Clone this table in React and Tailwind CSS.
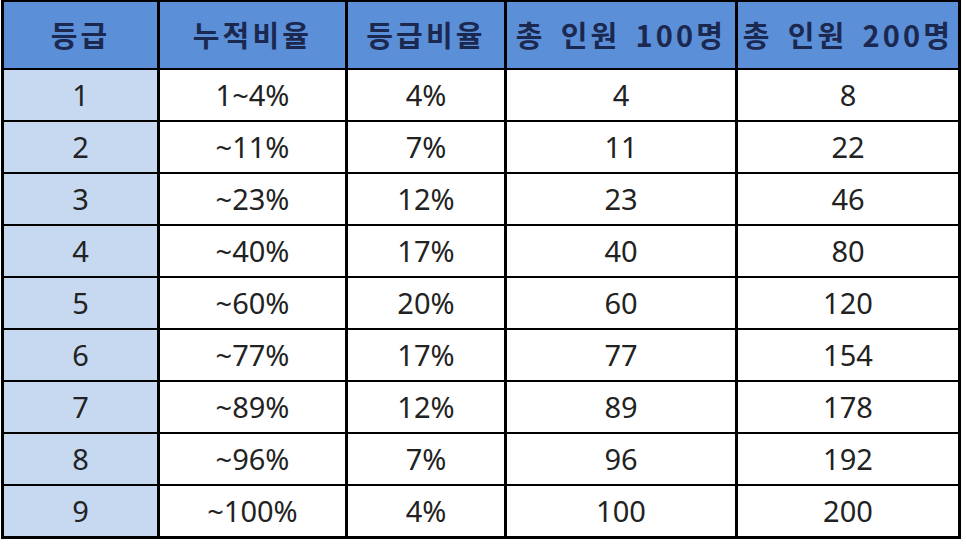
const headers = ["등급", "누적비율", "등급비율", "총 인원 100명", "총 인원 200명"];

const rows = [
    ["1", "1~4%", "4%", "4", "8"],
    ["2", "~11%", "7%", "11", "22"],
    ["3", "~23%", "12%", "23", "46"],
    ["4", "~40%", "17%", "40", "80"],
    ["5", "~60%", "20%", "60", "120"],
    ["6", "~77%", "17%", "77", "154"],
    ["7", "~89%", "12%", "89", "178"],
    ["8", "~96%", "7%", "96", "192"],
    ["9", "~100%", "4%", "100", "200"],
];

const App = () => {
    return (
        <div
            className="w-[966px] h-[544px] bg-white pl-px"
            style={{ fontFamily: '"Noto Sans", "Noto Sans CJK KR", sans-serif' }}
        >
            <div className="w-[960px] grid grid-cols-[153px_185px_156px_228px_220px] grid-rows-[66px_repeat(9,50px)] gap-x-[3px] gap-y-[2px] bg-black p-[3px] pt-[2px]">
                {headers.map((h) => (
                    <div
                        key={h}
                        className="bg-[#5b8fd8] flex items-center justify-center gap-[15px] text-[29px] font-semibold tracking-[0.11em] text-[#1b2850] whitespace-nowrap"
                        style={{ fontFamily: '"Noto Sans CJK KR", sans-serif' }}
                    >
                        {h.split(" ").map((w) => (
                            <span key={w}>{w}</span>
                        ))}
                    </div>
                ))}
                {rows.map((row, i) =>
                    row.map((cell, j) => (
                        <div
                            key={`${i}-${j}`}
                            className={`flex items-center justify-center text-[29px] text-[#222] ${
                                j === 0 ? "bg-[#c6d9f0]" : "bg-white"
                            }`}
                        >
                            {cell}
                        </div>
                    ))
                )}
            </div>
        </div>
    );
};

export default App;
